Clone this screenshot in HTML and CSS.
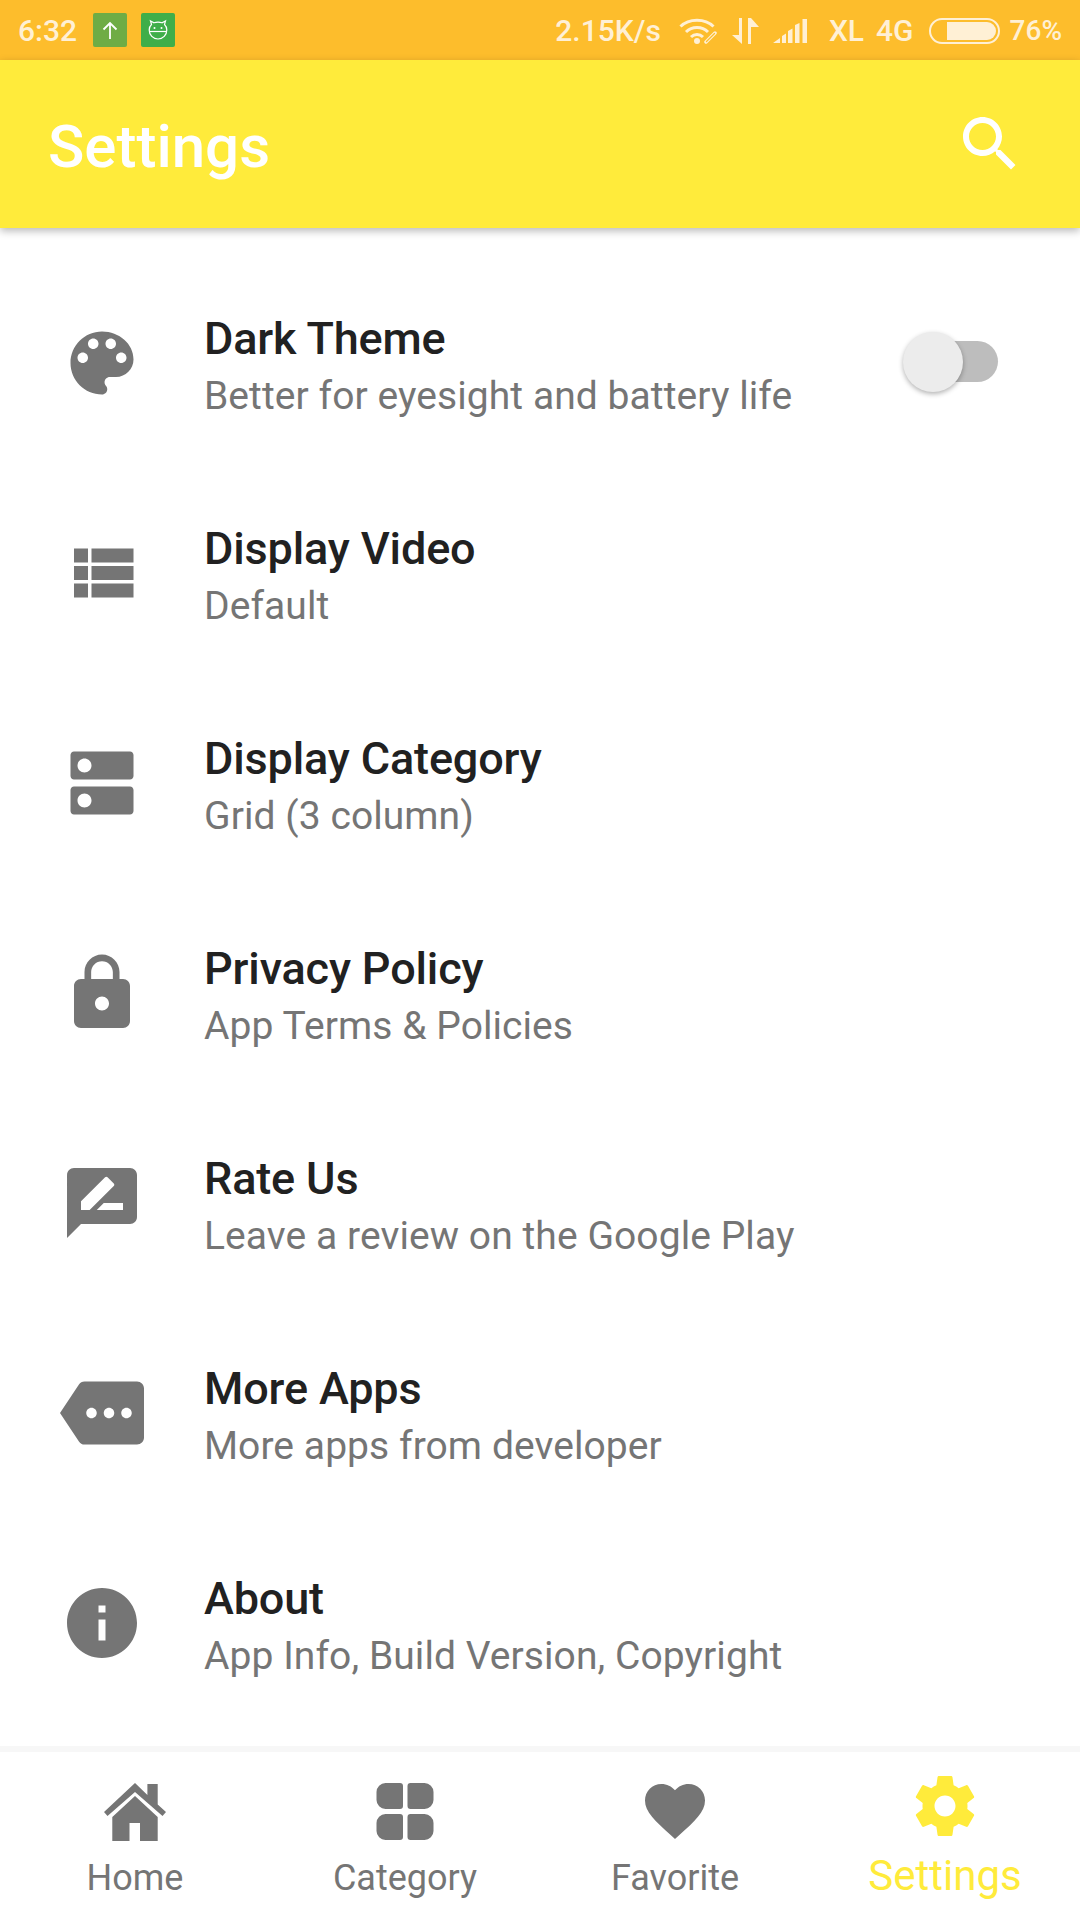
FILE: index.html
```html
<!DOCTYPE html>
<html lang="en">
<head>
<meta charset="utf-8">
<title>Settings</title>
<link rel="stylesheet" href="styles.css">
</head>
<body>
<div class="app">
  <div class="status">
    <span class="time">6:32</span>
    <span class="note note-up"><svg viewBox="0 0 34 34" class="fill-box"><path d="M17 26V10M10.500 16.500 17 10l6.500 6.500" fill="none" stroke="#fff" stroke-width="1.800"/></svg></span>
    <span class="note note-bot"><svg viewBox="0 0 34 34" class="fill-box"><g fill="none" stroke="#fff" stroke-width="1.200"><path d="M10.500 11.500 9.500 8l3.500 1.800c2.600-.9 5.400-.9 8 0L24.500 8l-1 3.500c1.500 1.400 2.300 3.300 2.300 5.500 0 5-3.900 9-8.800 9s-8.800-4-8.800-9c0-2.200.8-4.100 2.300-5.500z"/><path d="M8.300 18.500h17.400"/></g><circle cx="13.500" cy="15" r="1" fill="#fff"/><circle cx="20.500" cy="15" r="1" fill="#fff"/></svg></span>
    <span class="speed">2.15K/s</span>
    <svg class="wifi" viewBox="0 0 40 27"><g fill="none" stroke="#fff0d5" stroke-width="3"><path d="M1.500 9.500C10 1 26 1 34.500 9.500"/><path d="M7 15c6-6 16-6 22 0"/><path d="M12 20c3.500-3.500 8.500-3.500 12 0"/></g><circle cx="18" cy="24" r="3" fill="#fff0d5"/><path d="M27 25l9-9" stroke="#fff0d5" stroke-width="3.500" stroke-linecap="round"/><path d="M27.500 24.500l8-8" stroke="#fdbd2c" stroke-width="1.300" stroke-linecap="round"/></svg>
    <svg class="arrows" viewBox="0 0 27 26"><path d="M0 17h7V0h3v26zM16 0h3l8 9h-8v17h-3z" fill="#fff0d5"/></svg>
    <svg class="signal" viewBox="0 0 38 25"><path d="M0 25l7-5v5zM9 18l4-2.500V25H9zM15 13l4.500-2.500V25H15zM22 7l4.500-2V25H22zM29.500 1H34v24h-4.500z" fill="#fff0d5"/></svg>
    <span class="net net-xl">XL</span>
    <span class="net net-4g">4G</span>
    <span class="battery"><span class="battery-fill"></span></span>
    <span class="percent">76%</span>
  </div>

  <header class="appbar">
    <h1 class="appbar-title">Settings</h1>
    <svg class="icon-search" viewBox="0 0 24 24"><path d="M15.500 14h-.79l-.28-.27C15.410 12.590 16 11.110 16 9.500 16 5.910 13.090 3 9.500 3S3 5.910 3 9.500 5.910 16 9.500 16c1.610 0 3.090-.59 4.230-1.570l.27.28v.79l5 4.990L20.490 19l-4.990-5zm-6 0C7.010 14 5 11.990 5 9.500S7.010 5 9.500 5 14 7.010 14 9.500 11.990 14 9.500 14z"/></svg>
  </header>

  <main class="list">
    <div class="row">
      <div class="row-icon"><svg viewBox="0 0 24 24"><path d="M12 3c-4.970 0-9 4.030-9 9s4.030 9 9 9c.83 0 1.500-.67 1.500-1.500 0-.39-.15-.74-.39-1.010-.23-.26-.38-.61-.38-.99 0-.83.67-1.500 1.500-1.500H16c2.760 0 5-2.240 5-5 0-4.420-4.030-8-9-8zm-5.500 9c-.83 0-1.500-.67-1.500-1.500S5.670 9 6.500 9 8 9.670 8 10.500 7.330 12 6.500 12zm3-4C8.670 8 8 7.330 8 6.500S8.670 5 9.500 5s1.500.67 1.500 1.500S10.330 8 9.500 8zm5 0c-.83 0-1.500-.67-1.500-1.500S13.670 5 14.500 5s1.500.67 1.500 1.500S15.330 8 14.500 8zm3 4c-.83 0-1.500-.67-1.500-1.500S16.670 9 17.500 9s1.500.67 1.500 1.500-.67 1.500-1.500 1.500z"/></svg></div>
      <div class="row-text"><div class="row-title">Dark Theme</div><div class="row-sub">Better for eyesight and battery life</div></div>
      <div class="switch"><span class="switch-thumb"></span></div>
    </div>
    <div class="row">
      <div class="row-icon"><svg viewBox="0 0 24 24"><path d="M4 14h4v-4H4v4zm0 5h4v-4H4v4zM4 9h4V5H4v4zm5 5h12v-4H9v4zm0 5h12v-4H9v4zM9 5v4h12V5H9z"/></svg></div>
      <div class="row-text"><div class="row-title">Display Video</div><div class="row-sub">Default</div></div>
    </div>
    <div class="row">
      <div class="row-icon"><svg viewBox="0 0 24 24"><path d="M20 13H4c-.55 0-1 .45-1 1v6c0 .55.45 1 1 1h16c.55 0 1-.45 1-1v-6c0-.55-.45-1-1-1zM7 19c-1.100 0-2-.9-2-2s.9-2 2-2 2 .9 2 2-.9 2-2 2zM20 3H4c-.55 0-1 .45-1 1v6c0 .55.45 1 1 1h16c.55 0 1-.45 1-1V4c0-.55-.45-1-1-1zM7 9c-1.100 0-2-.9-2-2s.9-2 2-2 2 .9 2 2-.9 2-2 2z"/></svg></div>
      <div class="row-text"><div class="row-title">Display Category</div><div class="row-sub">Grid (3 column)</div></div>
    </div>
    <div class="row">
      <div class="row-icon"><svg viewBox="0 0 24 24"><path d="M18 8h-1V6c0-2.760-2.240-5-5-5S7 3.240 7 6v2H6c-1.100 0-2 .9-2 2v10c0 1.100.9 2 2 2h12c1.100 0 2-.9 2-2V10c0-1.100-.9-2-2-2zm-6 9c-1.100 0-2-.9-2-2s.9-2 2-2 2 .9 2 2-.9 2-2 2zm3.100-9H8.900V6c0-1.710 1.390-3.100 3.100-3.100 1.710 0 3.100 1.390 3.100 3.100v2z"/></svg></div>
      <div class="row-text"><div class="row-title">Privacy Policy</div><div class="row-sub">App Terms &amp; Policies</div></div>
    </div>
    <div class="row">
      <div class="row-icon"><svg viewBox="0 0 24 24"><path d="M20 2H4c-1.100 0-1.990.9-1.990 2L2 22l4-4h14c1.100 0 2-.9 2-2V4c0-1.100-.9-2-2-2zM6 14v-2.470l6.880-6.880c.2-.2.51-.2.71 0l1.770 1.770c.2.2.2.51 0 .71L8.470 14H6zm12 0h-7.500l2-2H18v2z"/></svg></div>
      <div class="row-text"><div class="row-title">Rate Us</div><div class="row-sub">Leave a review on the Google Play</div></div>
    </div>
    <div class="row">
      <div class="row-icon"><svg viewBox="0 0 24 24"><path d="M22 3H7c-.69 0-1.230.35-1.590.88L0 12l5.410 8.110c.36.51.9.89 1.590.89h15c1.100 0 2-.9 2-2V5c0-1.100-.9-2-2-2zM9 13.500c-.83 0-1.500-.67-1.500-1.500s.67-1.500 1.500-1.500 1.500.67 1.500 1.500-.67 1.500-1.500 1.500zm5 0c-.83 0-1.500-.67-1.500-1.500s.67-1.500 1.500-1.500 1.500.67 1.500 1.500-.67 1.500-1.500 1.500zm5 0c-.83 0-1.500-.67-1.500-1.500s.67-1.500 1.500-1.500 1.500.67 1.500 1.500-.67 1.500-1.500 1.500z"/></svg></div>
      <div class="row-text"><div class="row-title">More Apps</div><div class="row-sub">More apps from developer</div></div>
    </div>
    <div class="row">
      <div class="row-icon"><svg viewBox="0 0 24 24"><path d="M12 2C6.480 2 2 6.480 2 12s4.480 10 10 10 10-4.480 10-10S17.520 2 12 2zm1 15h-2v-6h2v6zm0-8h-2V7h2v2z"/></svg></div>
      <div class="row-text"><div class="row-title">About</div><div class="row-sub">App Info, Build Version, Copyright</div></div>
    </div>
  </main>

  <nav class="nav">
    <div class="tab">
      <svg class="tab-icon" viewBox="0 0 72 72"><path d="M36 8 48.400 20V9H58.700V29.500L67 37 63.500 41 36 17 8.500 41 5 37zM36 21 58.700 42V66H41V48H30.500V66H13.300V42z"/></svg>
      <span class="tab-label">Home</span>
    </div>
    <div class="tab">
      <svg class="tab-icon" viewBox="0 0 72 72"><path d="M16.500 8H31a3 3 0 0 1 3 3V31a3 3 0 0 1-3 3H16.500a9 9 0 0 1-9-9V17a9 9 0 0 1 9-9zM41.500 8H55.500a9 9 0 0 1 9 9V25a9 9 0 0 1-9 9H41.500a3 3 0 0 1-3-3V11a3 3 0 0 1 3-3zM16.500 39H31a3 3 0 0 1 3 3V62a3 3 0 0 1-3 3H16.500a9 9 0 0 1-9-9V48a9 9 0 0 1 9-9zM41.500 39H55.500a9 9 0 0 1 9 9V56a9 9 0 0 1-9 9H41.500a3 3 0 0 1-3-3V42a3 3 0 0 1 3-3z"/></svg>
      <span class="tab-label">Category</span>
    </div>
    <div class="tab">
      <svg class="tab-icon" viewBox="0 0 24 24"><path d="M12 21.350l-1.450-1.320C5.400 15.360 2 12.280 2 8.500 2 5.420 4.420 3 7.500 3c1.740 0 3.410.81 4.500 2.090C13.090 3.810 14.760 3 16.500 3 19.580 3 22 5.420 22 8.500c0 3.780-3.400 6.860-8.550 11.540L12 21.350z"/></svg>
      <span class="tab-label">Favorite</span>
    </div>
    <div class="tab tab-active">
      <svg class="tab-icon" viewBox="0 0 24 24"><path d="M19.430 12.980c.04-.32.07-.64.07-.98s-.03-.66-.07-.98l2.110-1.650c.19-.15.24-.42.12-.64l-2-3.460c-.12-.22-.39-.3-.61-.22l-2.490 1c-.52-.4-1.080-.73-1.690-.98l-.38-2.650C14.460 2.180 14.250 2 14 2h-4c-.25 0-.46.18-.49.42l-.38 2.650c-.61.25-1.170.59-1.690.98l-2.490-1c-.23-.09-.49 0-.61.22l-2 3.460c-.13.22-.07.49.12.64l2.110 1.650c-.04.32-.07.65-.07.98s.03.66.07.98l-2.110 1.650c-.19.15-.24.42-.12.64l2 3.460c.12.22.39.3.61.22l2.490-1c.52.4 1.080.73 1.690.98l.38 2.650c.03.24.24.42.49.42h4c.25 0 .46-.18.49-.42l.38-2.650c.61-.25 1.170-.59 1.690-.98l2.490 1c.23.09.49 0 .61-.22l2-3.460c.12-.22.07-.49-.12-.64l-2.110-1.650zM12 15.500c-1.930 0-3.500-1.570-3.500-3.500s1.570-3.500 3.500-3.500 3.500 1.570 3.500 3.500-1.570 3.500-3.500 3.500z"/></svg>
      <span class="tab-label">Settings</span>
    </div>
  </nav>
</div>
</body>
</html>
```

FILE: styles.css
```css
* { box-sizing: border-box; }
html, body { margin: 0; padding: 0; }
body { background: #fff; font-family: Roboto, "Liberation Sans", sans-serif; }
.app { width: 1080px; height: 1920px; display: flex; flex-direction: column; overflow: hidden; background: #fff; }

.status { height: 60px; flex: none; background: #fdbd2c; display: flex; align-items: center; padding: 1px 18px 0; color: #fff0d5; font-size: 30px; font-weight: 500; }
.time { width: 58px; white-space: nowrap; }
.note { width: 34px; height: 34px; border-radius: 2px; display: block; margin-top: -1px; }
.note-up { margin-left: 17px; background: #6fac45; }
.note-bot { margin-left: 14px; background: #3fae49; }
.fill-box { display: block; width: 100%; height: 100%; }
.speed { margin-left: auto; }
.wifi { width: 40px; height: 27px; margin-left: 18px; }
.arrows { width: 27px; height: 26px; margin-left: 13px; }
.signal { width: 38px; height: 25px; margin-left: 14px; }
.net-xl { margin-left: 18px; }
.net-4g { margin-left: 12px; }
.battery { width: 71px; height: 26px; margin-left: 15px; border: 2px solid #fff0d5; border-radius: 13px; padding: 2px 2px 2px 16px; display: block; }
.battery-fill { display: block; height: 100%; background: #fff0d5; border-radius: 0 9px 9px 0; }
.percent { margin-left: 10px; font-size: 28px; }

.appbar { height: 168px; flex: none; position: relative; z-index: 1; background: #ffeb3b; display: flex; align-items: center; justify-content: space-between; padding: 0 54px 0 48px; box-shadow: 0 3px 8px rgba(0, 0, 0, .28); }
.appbar-title { margin: 5px 0 0; color: #fff; font-size: 60px; font-weight: 500; line-height: 70px; }
.icon-search { width: 72px; height: 72px; fill: #fff; }

.list { flex: 1; padding-top: 30px; }
.row { height: 210px; display: flex; align-items: center; padding-right: 82px; }
.row-icon { width: 204px; flex: none; display: flex; justify-content: center; }
.row-icon svg { width: 84px; height: 84px; fill: #757575; }
.row-text { flex: 1; padding-top: 8px; }
.row-title { color: #212121; font-size: 45px; font-weight: 500; line-height: 57px; letter-spacing: -.15px; }
.row-sub { color: #757575; font-size: 39px; line-height: 58px; letter-spacing: .07px; }

.switch { width: 75px; height: 41px; margin-bottom: 3px; background: #bdbdbd; border-radius: 21px; position: relative; }
.switch-thumb { position: absolute; left: -20px; top: -9px; width: 60px; height: 60px; border-radius: 50%; background: #ececec; box-shadow: 0 2px 5px rgba(0, 0, 0, .3); }

.nav { height: 174px; flex: none; border-top: 6px solid #f7f7f7; display: grid; grid-template-columns: repeat(4, 270px); background: #fff; }
.tab { display: flex; flex-direction: column; align-items: center; padding-top: 23px; color: #757575; }
.tab-icon { width: 72px; height: 72px; fill: #757575; flex: none; }
.tab-label { font-size: 36px; line-height: 42px; margin-top: 10px; }
.tab-active { padding-top: 18px; color: #ffeb3b; }
.tab-active .tab-icon { fill: #ffeb3b; }
.tab-active .tab-label { font-size: 42px; line-height: 50px; margin-top: 9px; }
```
